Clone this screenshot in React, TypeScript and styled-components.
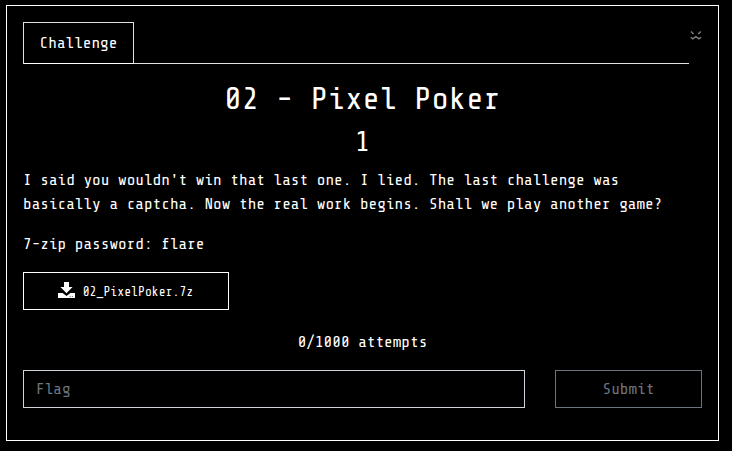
import React from 'react';
import styled, { createGlobalStyle } from 'styled-components';

const GlobalStyle = createGlobalStyle`
  *, *::before, *::after { box-sizing: border-box; }
  body {
    margin: 0;
    background: #000;
    color: #fff;
    font-family: "Share Tech Mono", "DejaVu Sans Mono", monospace;
    font-size: 16px;
    line-height: 24px;
  }
`;

const Dialog = styled.main`
  width: 713px;
  height: 436px;
  margin: 5px 0 0 6px;
  padding: 16px;
  border: 1px solid #fff;
`;

const Header = styled.header`
  display: flex;
  align-items: flex-start;
`;

const TabBar = styled.nav`
  display: flex;
  flex: 1;
  height: 42px;
  border-bottom: 1px solid #dee2e6;
`;

const Tab = styled.button`
  width: 111px;
  height: 42px;
  padding: 0;
  border: 1px solid #dee2e6;
  border-bottom-color: #fff;
  background: #000;
  color: #fff;
  font: inherit;
`;

const CloseButton = styled.button`
  display: flex;
  width: 13px;
  height: 20px;
  margin-top: 4px;
  padding: 4px 0 0 1px;
  border: 0;
  background: none;
  color: #7f7f7f;
`;

const Title = styled.h2`
  height: 38.4px;
  margin: 16px 0 8px;
  font-size: 32px;
  font-weight: 400;
  line-height: 38.4px;
  text-align: center;
`;

const Points = styled.h3`
  height: 33.6px;
  margin: 0 0 8px;
  font-size: 28px;
  font-weight: 400;
  line-height: 33.6px;
  text-align: center;
`;

const Paragraph = styled.p`
  margin: 0 0 16px;
`;

const FileButton = styled.button`
  display: flex;
  align-items: center;
  justify-content: center;
  gap: 8px;
  width: 206px;
  height: 38px;
  padding: 0 1px 0 0;
  border: 1px solid #fff;
  background: #000;
  color: #fff;
  font: inherit;
`;

const FileName = styled.small`
  padding-top: 2px;
  font-size: 12.8px;
`;

const Attempts = styled.p`
  margin: 20px 0 16px;
  text-align: center;
`;

const Form = styled.form`
  display: flex;
  justify-content: space-between;
`;

const FlagInput = styled.input`
  width: 502px;
  height: 38px;
  padding: 0 12px;
  border: 1px solid #ced4da;
  border-radius: 0;
  outline: 0;
  background: #000;
  color: #fff;
  font: inherit;
  &::placeholder { color: #6c757d; opacity: 1; }
`;

const Submit = styled.button`
  width: 147px;
  height: 38px;
  padding: 0;
  border: 1px solid #6c757d;
  background: #000;
  color: #6c757d;
  font: inherit;
`;

const DownloadGlyph = styled.svg`
  margin-bottom: 2px;
`;

const DownloadIcon = () => (
  <DownloadGlyph width="17" height="16" viewBox="0 0 17 16" fill="currentColor" aria-hidden="true">
    <path d="M6 0h5v5h3.6L8.5 11.2 2.4 5H6z" />
    <path d="M0 11h4.6l3.9 2.9 3.9-2.9H17v5H0z" />
    <path d="M11.5 14.5h1.2M13.8 14.5h1.2" stroke="#000" strokeWidth="0.5" />
  </DownloadGlyph>
);

const CloseIcon = () => (
  <svg width="12" height="10" viewBox="0 0 12 10" fill="none" stroke="currentColor" strokeWidth="1.4">
    <path d="M1 1.5l2.6 2.6M10.8 1.5L8.2 4.1M.7 7.3l2.1 1.5 3.1-2.2L9 8.8l2.1-1.5" />
  </svg>
);

export default function App() {
  return (
    <>
      <GlobalStyle />
      <Dialog>
        <Header>
          <TabBar><Tab>Challenge</Tab></TabBar>
          <CloseButton aria-label="Close"><CloseIcon /></CloseButton>
        </Header>
        <Title>02 - Pixel Poker</Title>
        <Points>1</Points>
        <Paragraph>
          I said you wouldn't win that last one. I lied. The last challenge was
          <br />
          basically a captcha. Now the real work begins. Shall we play another game?
        </Paragraph>
        <Paragraph>7-zip password: flare</Paragraph>
        <FileButton>
          <DownloadIcon />
          <FileName>02_PixelPoker.7z</FileName>
        </FileButton>
        <Attempts>0/1000 attempts</Attempts>
        <Form onSubmit={(e) => e.preventDefault()}>
          <FlagInput placeholder="Flag" />
          <Submit>Submit</Submit>
        </Form>
      </Dialog>
    </>
  );
}
